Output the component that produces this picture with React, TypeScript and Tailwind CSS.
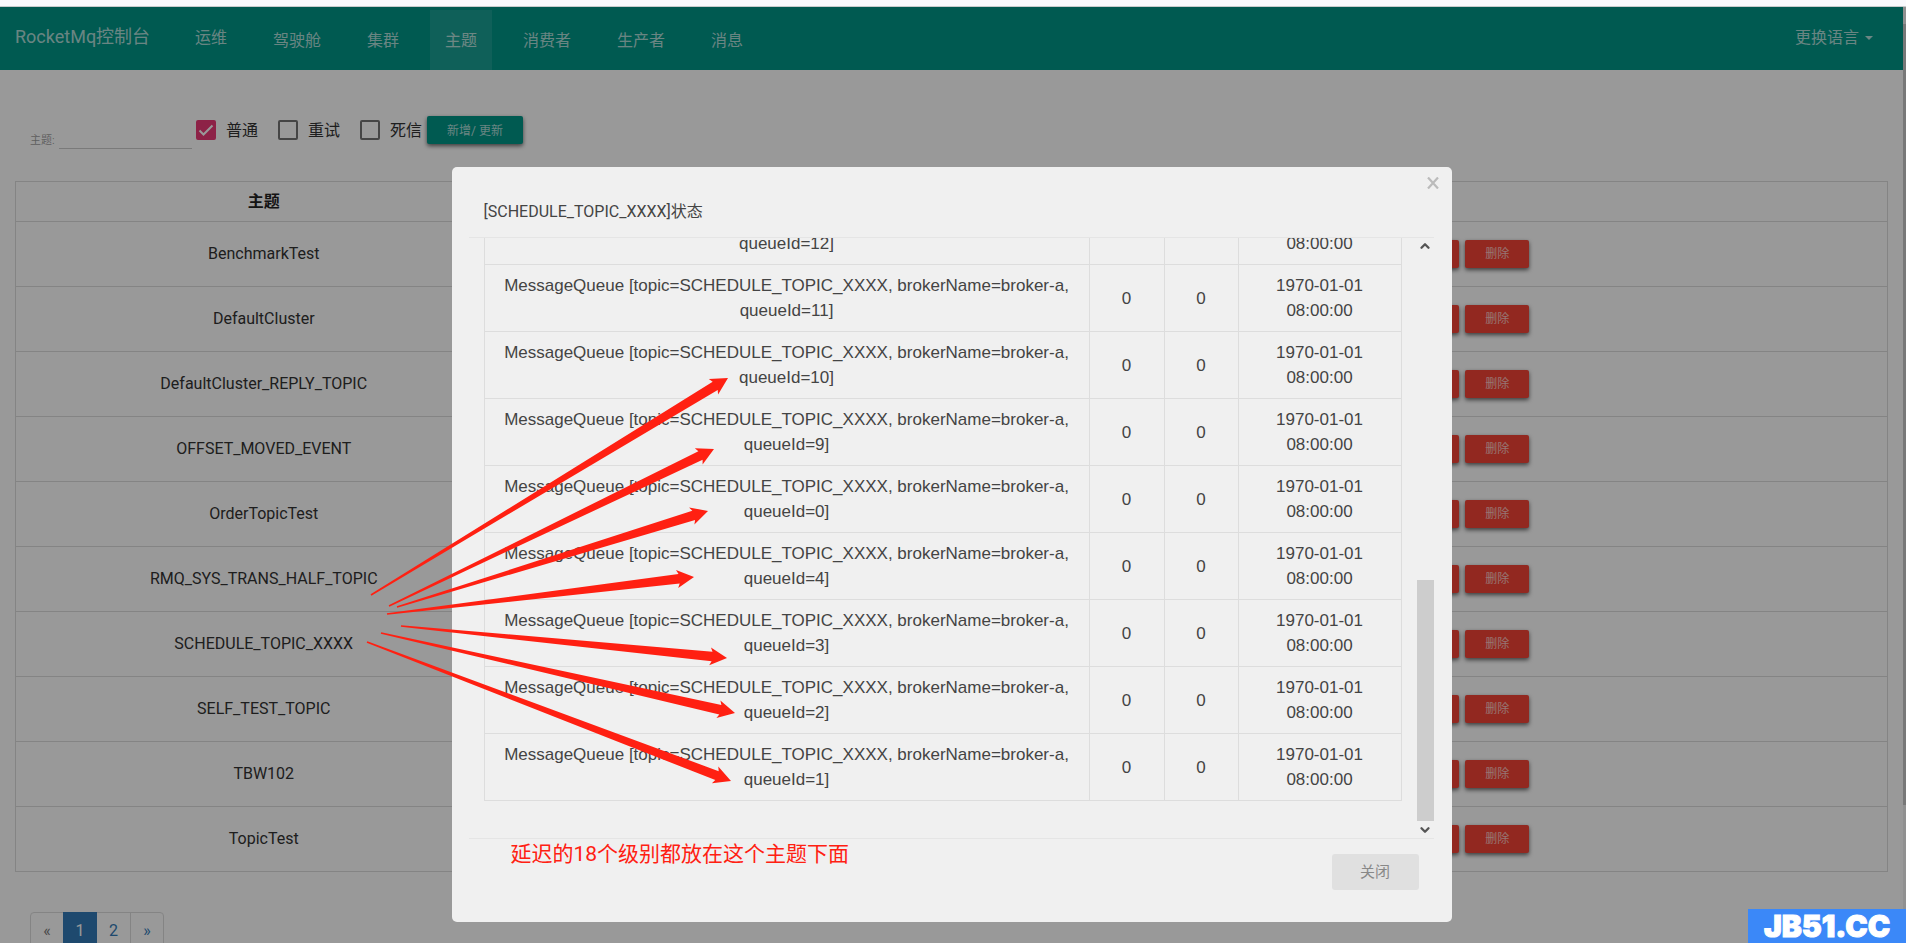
import React, { useState } from 'react';
import { ChevronDown, ChevronUp } from 'lucide-react';

const topics = [
  'BenchmarkTest',
  'DefaultCluster',
  'DefaultCluster_REPLY_TOPIC',
  'OFFSET_MOVED_EVENT',
  'OrderTopicTest',
  'RMQ_SYS_TRANS_HALF_TOPIC',
  'SCHEDULE_TOPIC_XXXX',
  'SELF_TEST_TOPIC',
  'TBW102',
  'TopicTest',
];

const queueIds = [12, 11, 10, 9, 0, 4, 3, 2, 1];

const navItems = ['驾驶舱', '集群', '主题', '消费者', '生产者', '消息'];

const filters = [
  { id: 'normal', label: '普通', checked: true },
  { id: 'retry', label: '重试', checked: false },
  { id: 'dlq', label: '死信', checked: false },
];

// tail x, tail y, tip x, tip y
const arrows = [
  [371, 595, 728, 378],
  [389, 606, 714, 449],
  [397, 607, 708, 511],
  [387, 614, 694, 577],
  [401, 626, 727, 658],
  [381, 633, 735, 713],
  [367, 642, 731, 781],
];

function arrowPoints([x1, y1, x2, y2]: number[]) {
  const length = Math.hypot(x2 - x1, y2 - y1);
  const ux = (x2 - x1) / length;
  const uy = (y2 - y1) / length;
  const at = (along: number, side: number) =>
    `${(x1 + ux * along - uy * side).toFixed(1)},${(y1 + uy * along + ux * side).toFixed(1)}`;

  return [
    at(0, -0.8),
    at(length - 15, -4.8),
    at(length - 17, -9),
    at(length, 0),
    at(length - 17, 9),
    at(length - 15, 4.8),
    at(0, 0.8),
  ].join(' ');
}

function Navbar() {
  return (
    <nav className="flex h-[63px] items-start bg-[#009688] text-base text-white/70">
      <a href="#" className="flex h-[60px] w-[180px] items-center pl-[15px] text-lg">
        RocketMq控制台
      </a>
      <a href="#ops" className="mr-4 flex h-[60px] items-center px-[15px] pt-[2px]">
        运维
      </a>
      <div className="flex gap-4 self-end">
        {navItems.map((item) => (
          <a
            key={item}
            href={`#${item}`}
            className={`flex h-[60px] items-center px-[15px] pt-[2px] ${item === '主题' ? 'bg-white/10' : ''}`}
          >
            {item}
          </a>
        ))}
      </div>
      <button className="mr-[30px] ml-auto flex h-[60px] items-center gap-[6px] pt-[2px]">
        更换语言
        <span className="border-x-4 border-t-4 border-x-transparent border-t-white/70" />
      </button>
    </nav>
  );
}

function FilterBar() {
  const [checked, setChecked] = useState<Record<string, boolean>>(
    Object.fromEntries(filters.map((f) => [f.id, f.checked]))
  );

  return (
    <form className="flex h-10 items-center pl-[30px]">
      <div className="mr-1 mb-px flex items-end gap-[5px] self-end">
        <label htmlFor="topic" className="w-6 text-[11px] leading-4 whitespace-nowrap text-black/40">
          主题:
        </label>
        <input
          id="topic"
          type="text"
          className="h-7 w-[133px] border-b border-black/20 bg-transparent text-sm outline-none"
        />
      </div>
      <div className="mr-[5px] flex gap-5">
        {filters.map((filter) => (
          <label key={filter.id} className="flex items-center gap-[10px] text-base leading-5 text-[#333]">
            <span className="relative flex">
              <input
                type="checkbox"
                checked={checked[filter.id]}
                onChange={(e) => setChecked({ ...checked, [filter.id]: e.target.checked })}
                className="size-5 appearance-none rounded-xs border-2 border-black/55 checked:border-[#eb3a77] checked:bg-[#eb3a77]"
              />
              {checked[filter.id] && (
                <svg viewBox="0 0 20 20" className="pointer-events-none absolute inset-0 size-5">
                  <path d="M3.5 10.5 L7.5 14.5 L16.5 5.5" fill="none" stroke="#fff" strokeWidth="2" />
                </svg>
              )}
            </span>
            <span className="pt-[2px]">{filter.label}</span>
          </label>
        ))}
      </div>
      <button
        type="button"
        className="h-7 w-24 rounded-xs bg-[#009688] pt-px text-xs text-white/70 shadow-[0_2px_4px_rgba(0,0,0,0.6)]"
      >
        新增/ 更新
      </button>
    </form>
  );
}

function TopicTable() {
  return (
    <table className="w-full table-fixed border-collapse text-center text-base text-[#333]">
      <thead>
        <tr className="h-10">
          <th className="w-[496px] border-y border-l border-[#ddd] text-[#222]">主题</th>
          <th className="border-y border-r border-[#ddd]" />
        </tr>
      </thead>
      <tbody>
        {topics.map((topic) => (
          <tr key={topic} className="h-[65px]">
            <td className="border-y border-l border-[#ddd]">{topic}</td>
            <td className="border-y border-r border-[#ddd]">
              <div className="mx-auto flex w-[660px] justify-end gap-[6px]">
                <button
                  aria-label="重置"
                  className="h-7 w-28 rounded-xs bg-[#f44336] shadow-[0_2px_4px_rgba(0,0,0,0.6)]"
                />
                <button className="h-7 w-16 rounded-xs bg-[#f44336] text-xs text-white/70 shadow-[0_2px_4px_rgba(0,0,0,0.6)]">
                  删除
                </button>
              </div>
            </td>
          </tr>
        ))}
      </tbody>
    </table>
  );
}

function Pagination() {
  return (
    <ul className="ml-[30px] flex w-fit rounded border border-[#ddd] text-base leading-9 text-[#337ab7]">
      <li className="w-8 text-center">
        <a href="#prev" className="text-[#777]">«</a>
      </li>
      <li className="-mt-px w-[34px] bg-[#337ab7] pt-px text-center text-white">
        <a href="#1">1</a>
      </li>
      <li className="w-[34px] border-r border-[#ddd] text-center">
        <a href="#2">2</a>
      </li>
      <li className="w-8 text-center">
        <a href="#next">»</a>
      </li>
    </ul>
  );
}

function StatusDialog() {
  return (
    <div
      role="dialog"
      aria-labelledby="dialog-title"
      className="flex w-[1000px] flex-col rounded-[5px] bg-[#f0f0f0] pr-[18px] pl-[17px] text-[#444]"
    >
      <div className="flex h-[27px] justify-end">
        <button aria-label="关闭" className="-mr-[13px] flex size-[27px] items-center justify-center pt-1">
          <svg viewBox="0 0 12 12" className="size-3">
            <path d="M1 0.5 L11 11.5 M11 0.5 L1 11.5" stroke="#bbb" strokeWidth="2.2" />
          </svg>
        </button>
      </div>
      <h4 id="dialog-title" className="h-11 border-b border-[#e5e5e5] pt-2 pl-[15px] text-base leading-5">
        [SCHEDULE_TOPIC_XXXX]状态
      </h4>

      <div className="flex h-[600px] gap-[15px] overflow-hidden">
        <div className="flex flex-1 flex-col justify-end pb-[37px] pl-[15px]">
          <table className="w-full table-fixed border-collapse text-center font-['Liberation_Sans',sans-serif] text-[17px] leading-[25px]">
            <colgroup>
              <col />
              <col className="w-[75px]" />
              <col className="w-[74px]" />
              <col className="w-[163px]" />
            </colgroup>
            <tbody>
              {queueIds.map((id) => (
                <tr key={id}>
                  <td className="border border-[#ddd] p-2">
                    {`MessageQueue [topic=SCHEDULE_TOPIC_XXXX, brokerName=broker-a, queueId=${id}]`}
                  </td>
                  <td className="border border-[#ddd] p-2">0</td>
                  <td className="border border-[#ddd] p-2">0</td>
                  <td className="border border-[#ddd] px-8 py-2">1970-01-01 08:00:00</td>
                </tr>
              ))}
            </tbody>
          </table>
        </div>
        <div className="flex w-[17px] flex-col items-center justify-end">
          <ChevronUp className="mt-px mb-auto size-[14px] text-[#555]" strokeWidth={4} />
          <div className="h-[241px] w-full bg-[#cdcdcd]" />
          <ChevronDown className="mt-[2px] mb-px size-[14px] text-[#555]" strokeWidth={4} />
        </div>
      </div>

      <div className="flex h-[84px] items-start justify-between border-t border-[#e5e5e5] pr-[15px] pl-[42px]">
        <p className="text-[21px] leading-[30px] text-[#ff2012]">延迟的18个级别都放在这个主题下面</p>
        <button className="mt-[15px] h-9 w-[87px] rounded-[3px] bg-[#e0e0e0] pt-px text-[15px] text-[#888]">
          关闭
        </button>
      </div>
    </div>
  );
}

export default function App() {
  return (
    <div className="relative flex h-screen flex-col overflow-hidden bg-white font-[Roboto,'Noto_Sans_CJK_SC',sans-serif]">
      <div className="h-[7px] shrink-0 border-b border-[#c8cccd] bg-[#f9fafd]" />
      <div className="relative flex min-h-0 flex-1">
        <main className="min-w-0 flex-1 overflow-hidden">
          <Navbar />
          <div className="pt-10">
            <FilterBar />
          </div>
          <div className="px-[15px] pt-[31px] pb-10">
            <TopicTable />
          </div>
          <Pagination />
        </main>
        <div className="w-[3px] bg-[#f1f1f1] pt-[17px]">
          <div className="h-[781px] bg-[#c8c8c8]" />
        </div>

        {/* Backdrop */}
        <div className="absolute inset-0 flex items-start justify-center bg-black/40 pt-[160px] pr-[3px]">
          <StatusDialog />
        </div>
      </div>

      {/* Arrows from the topic to its queues */}
      <svg className="pointer-events-none absolute top-0 left-0 h-full w-full" fill="#ff2012">
        {arrows.map((arrow) => (
          <polygon key={arrow.join()} points={arrowPoints(arrow)} />
        ))}
      </svg>

      <div className="absolute right-0 bottom-0 flex h-[34px] w-[158px] items-center justify-center bg-[#3b88f8] font-[Inter,sans-serif] text-[30px] font-black text-white [-webkit-text-stroke:1px_white]">
        JB51.CC
      </div>
    </div>
  );
}
